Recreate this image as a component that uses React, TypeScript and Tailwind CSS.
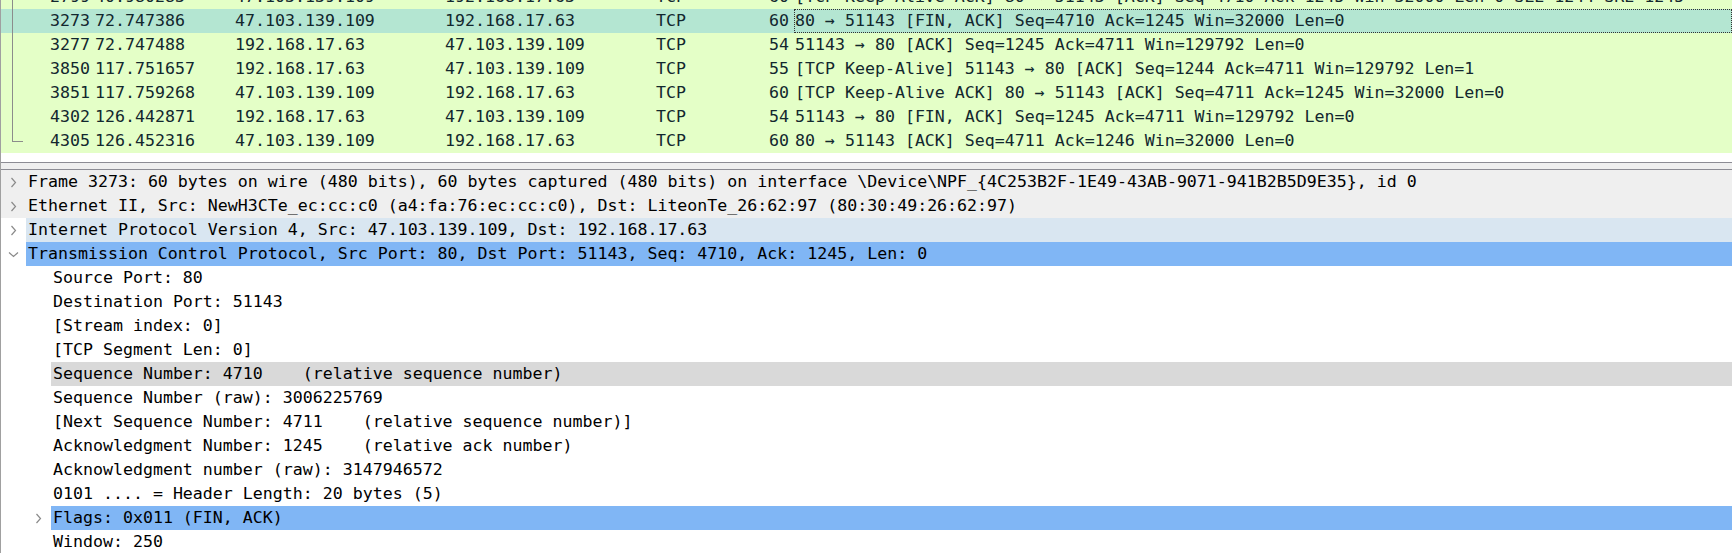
import React from 'react';

type Packet = {
  no: string;
  time: string;
  src: string;
  dst: string;
  proto: string;
  len: string;
  info: string;
  selected?: boolean;
};

const packets: Packet[] = [
  { no: '2799', time: '40.980283', src: '47.103.139.109', dst: '192.168.17.63', proto: 'TCP', len: '60', info: '[TCP Keep-Alive ACK] 80 → 51143 [ACK] Seq=4710 Ack=1245 Win=32000 Len=0 SLE=1244 SRE=1245' },
  { no: '3273', time: '72.747386', src: '47.103.139.109', dst: '192.168.17.63', proto: 'TCP', len: '60', info: '80 → 51143 [FIN, ACK] Seq=4710 Ack=1245 Win=32000 Len=0', selected: true },
  { no: '3277', time: '72.747488', src: '192.168.17.63', dst: '47.103.139.109', proto: 'TCP', len: '54', info: '51143 → 80 [ACK] Seq=1245 Ack=4711 Win=129792 Len=0' },
  { no: '3850', time: '117.751657', src: '192.168.17.63', dst: '47.103.139.109', proto: 'TCP', len: '55', info: '[TCP Keep-Alive] 51143 → 80 [ACK] Seq=1244 Ack=4711 Win=129792 Len=1' },
  { no: '3851', time: '117.759268', src: '47.103.139.109', dst: '192.168.17.63', proto: 'TCP', len: '60', info: '[TCP Keep-Alive ACK] 80 → 51143 [ACK] Seq=4711 Ack=1245 Win=32000 Len=0' },
  { no: '4302', time: '126.442871', src: '192.168.17.63', dst: '47.103.139.109', proto: 'TCP', len: '54', info: '51143 → 80 [FIN, ACK] Seq=1245 Ack=4711 Win=129792 Len=0' },
  { no: '4305', time: '126.452316', src: '47.103.139.109', dst: '192.168.17.63', proto: 'TCP', len: '60', info: '80 → 51143 [ACK] Seq=4711 Ack=1246 Win=32000 Len=0' },
];

type Field = {
  text: string;
  level: 0 | 1;
  arrow?: 'closed' | 'open';
  rowBg?: string;
  cellBg?: string;
};

const fields: Field[] = [
  { text: 'Frame 3273: 60 bytes on wire (480 bits), 60 bytes captured (480 bits) on interface \\Device\\NPF_{4C253B2F-1E49-43AB-9071-941B2B5D9E35}, id 0', level: 0, arrow: 'closed', rowBg: 'bg-[#efefef]' },
  { text: 'Ethernet II, Src: NewH3CTe_ec:cc:c0 (a4:fa:76:ec:cc:c0), Dst: LiteonTe_26:62:97 (80:30:49:26:62:97)', level: 0, arrow: 'closed', rowBg: 'bg-[#efefef]' },
  { text: 'Internet Protocol Version 4, Src: 47.103.139.109, Dst: 192.168.17.63', level: 0, arrow: 'closed', cellBg: 'bg-[#d9e6f1]' },
  { text: 'Transmission Control Protocol, Src Port: 80, Dst Port: 51143, Seq: 4710, Ack: 1245, Len: 0', level: 0, arrow: 'open', cellBg: 'bg-[#80b6f5]' },
  { text: 'Source Port: 80', level: 1 },
  { text: 'Destination Port: 51143', level: 1 },
  { text: '[Stream index: 0]', level: 1 },
  { text: '[TCP Segment Len: 0]', level: 1 },
  { text: 'Sequence Number: 4710    (relative sequence number)', level: 1, cellBg: 'bg-[#d9d9d9]' },
  { text: 'Sequence Number (raw): 3006225769', level: 1 },
  { text: '[Next Sequence Number: 4711    (relative sequence number)]', level: 1 },
  { text: 'Acknowledgment Number: 1245    (relative ack number)', level: 1 },
  { text: 'Acknowledgment number (raw): 3147946572', level: 1 },
  { text: '0101 .... = Header Length: 20 bytes (5)', level: 1 },
  { text: 'Flags: 0x011 (FIN, ACK)', level: 1, arrow: 'closed', cellBg: 'bg-[#80b6f5]' },
  { text: 'Window: 250', level: 1 },
];

function Arrow({ open }: { open: boolean }) {
  if (open) {
    return (
      <svg width="11" height="7" viewBox="0 0 11 7">
        <path d="M1 1.5 L5.5 5.5 L10 1.5" stroke="#8a8a8a" strokeWidth="1.2" fill="none" />
      </svg>
    );
  }
  return (
    <svg width="7" height="11" viewBox="0 0 7 11">
      <path d="M1.5 1 L5.5 5.5 L1.5 10" stroke="#8a8a8a" strokeWidth="1.2" fill="none" />
    </svg>
  );
}

function PacketRow({ p }: { p: Packet }) {
  return (
    <div className={`flex h-[24px] leading-[24px] whitespace-pre overflow-hidden ${p.selected ? 'bg-[#b4e6d2]' : 'bg-[#e4ffc7]'}`}>
      <div className="w-[89px] shrink-0 text-right">{p.no}</div>
      <div className="w-[140px] shrink-0 pl-[5px]">{p.time}</div>
      <div className="w-[210px] shrink-0 pl-[5px]">{p.src}</div>
      <div className="w-[210px] shrink-0 pl-[5px]">{p.dst}</div>
      <div className="w-[84px] shrink-0 pl-[6px]">{p.proto}</div>
      <div className="w-[55px] shrink-0 text-right">{p.len}</div>
      <div className={`flex-1 ml-[5px] pl-[1px] ${p.selected ? 'outline-1 outline-dotted outline-[#333] -outline-offset-1' : ''}`}>{p.info}</div>
    </div>
  );
}

function FieldRow({ f }: { f: Field }) {
  return (
    <div className={`flex h-[24px] leading-[24px] whitespace-pre overflow-hidden ${f.rowBg ?? ''}`}>
      <div className={`${f.level === 0 ? 'w-[25px]' : 'w-[50px] pl-[25px]'} shrink-0 flex items-center justify-center`}>
        {f.arrow && <Arrow open={f.arrow === 'open'} />}
      </div>
      <div className={`flex-1 pl-[2px] ${f.cellBg ?? ''}`}>{f.text}</div>
    </div>
  );
}

export default function App() {
  return (
    <div className="w-[1732px] h-[553px] overflow-hidden bg-white border-l border-[#a0a0a0] font-['DejaVu_Sans_Mono',monospace] text-[16.6px]">
      <div className="relative h-[162px] overflow-hidden text-[#12272e]">
        <div className="-mt-[15px]">
          {packets.map((p) => (
            <PacketRow key={p.no} p={p} />
          ))}
        </div>
        <div className="absolute left-[11px] top-0 h-[142px] w-[1px] bg-[#8c8c8c]" />
        <div className="absolute left-[11px] top-[141px] h-[1px] w-[11px] bg-[#8c8c8c]" />
      </div>
      <div className="h-[8px] border-y border-[#8c8c94] bg-[#efefef]" />
      <div className="h-[383px] overflow-hidden text-black">
        {fields.map((f, i) => (
          <FieldRow key={i} f={f} />
        ))}
      </div>
    </div>
  );
}
